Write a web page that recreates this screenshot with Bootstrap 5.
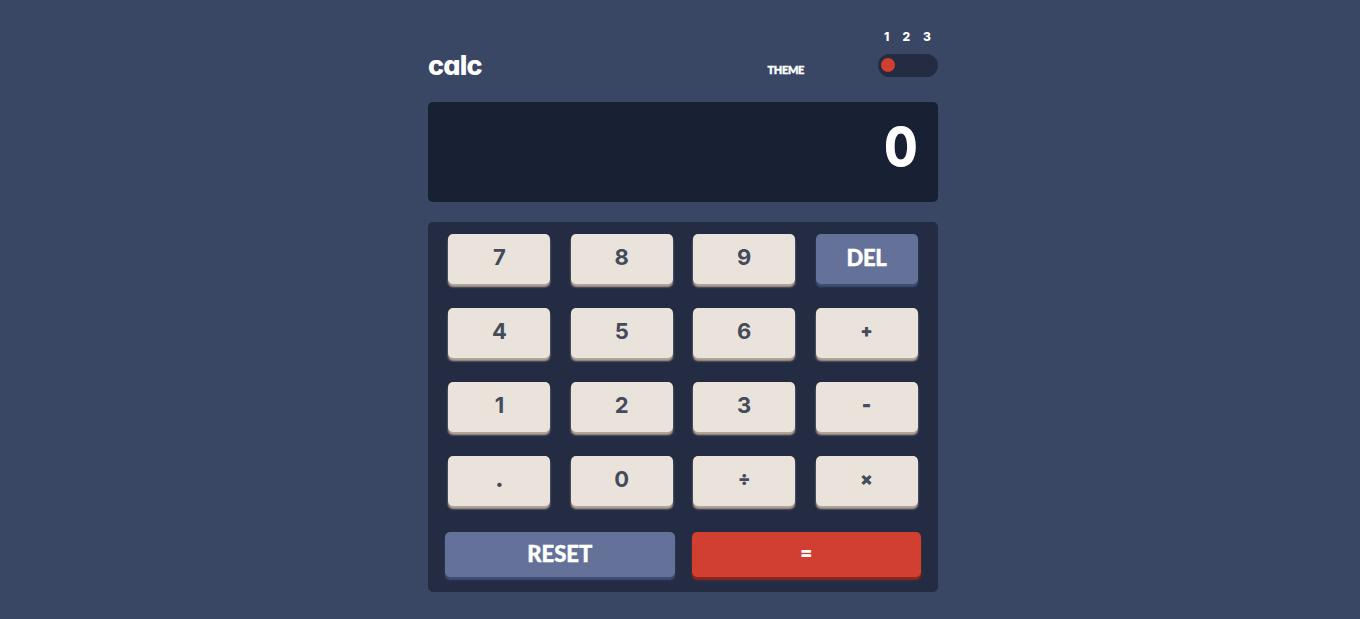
<!DOCTYPE html>
<html lang="en">
<head>
<meta charset="utf-8">
<meta name="viewport" content="width=device-width, initial-scale=1">
<title>calc</title>
<link href="https://cdn.jsdelivr.net/npm/bootstrap@5.3.0/dist/css/bootstrap.min.css" rel="stylesheet">
<style>
  body { background: #3a4764; color: #fff; font-family: Inter, "Liberation Sans", sans-serif; font-weight: 700; font-feature-settings: "cv11", "cv03", "cv04"; }
  .calculator { width: 510px; margin-left: 428px; padding-top: 30px; }
  .top-bar { height: 72px; }
  .brand { font-size: 27px; font-weight: 800; line-height: 36px; letter-spacing: -.8px; margin-top: 18px; }
  .theme-label { font-family: Lato, sans-serif; font-size: 11px; font-weight: 900; line-height: 14px; letter-spacing: -.35px; -webkit-text-stroke: .4px #fff; margin: 33px 74px 0 auto; }
  .theme-nums { font-size: 12px; font-weight: 800; line-height: 14px; padding: 0 7px 0 6px; }
  .switch-track { width: 60px; height: 23px; border-radius: 12px; background: #232c43; padding: 4px 3px; margin-top: 10px; }
  .switch-knob { width: 14px; height: 14px; background: #d03f2f; }
  .screen { height: 100px; background: #182034; border-radius: 5px; padding: 18px 20px; font-size: 53px; font-weight: 800; line-height: 54px; }
  .screen-value { display: inline-block; transform: scaleX(.92); transform-origin: right; }
  .keypad { height: 370px; margin-top: 20px; padding-top: 12px; background: #232c43; border-radius: 5px; }
  .key-row { margin-bottom: 24px; }
  .key-row:last-child { margin: 26px 0 0; }
  .key { --bs-btn-border-width: 0; --bs-btn-border-radius: 5px; --bs-btn-padding-x: 0; --bs-btn-padding-y: 0; --bs-btn-font-size: 22px; --bs-btn-font-weight: 700; --bs-btn-color: #444b5a; --bs-btn-bg: #eae3dc; --bs-btn-hover-color: #444b5a; --bs-btn-hover-bg: #fff; --edge: #b4a597; width: 20%; height: 50px; line-height: 46px; padding-bottom: 4px; box-shadow: 0 3px 2px var(--edge); }
  .key-blue { --bs-btn-color: #fff; --bs-btn-bg: #647299; --bs-btn-hover-color: #fff; --bs-btn-hover-bg: #7a88b0; --bs-btn-font-weight: 900; --bs-btn-font-family: Lato, sans-serif; --edge: #414f78; line-height: 48px; padding-bottom: 2px; letter-spacing: -.3px; -webkit-text-stroke: .4px #fff; }
  .key-red { --bs-btn-color: #fff; --bs-btn-bg: #d03f2f; --bs-btn-hover-color: #fff; --bs-btn-hover-bg: #e65b4c; --edge: #93261a; }
  .key-wide { width: 45%; height: 45px; line-height: 42px; }
  .key-wide.key-blue { line-height: 43px; letter-spacing: 0; }
  .key-op { --bs-btn-font-weight: 900; font-size: 18px; }
  .key-minus { -webkit-text-stroke: .7px; }
  .key-dot { --bs-btn-font-weight: 900; }
</style>
</head>
<body>
<main class="calculator">
  <header class="top-bar d-flex align-items-start">
    <div class="brand">calc</div>
    <div class="theme-label">THEME</div>
    <div>
      <div class="theme-nums d-flex justify-content-between"><span>1</span><span>2</span><span>3</span></div>
      <div class="switch-track"><div class="switch-knob rounded-circle"></div></div>
    </div>
  </header>
  <div class="screen text-end"><span class="screen-value">0</span></div>
  <section class="keypad">
    <div class="key-row d-flex justify-content-evenly">
      <button class="btn key">7</button><button class="btn key">8</button><button class="btn key">9</button><button class="btn key key-blue">DEL</button>
    </div>
    <div class="key-row d-flex justify-content-evenly">
      <button class="btn key">4</button><button class="btn key">5</button><button class="btn key">6</button><button class="btn key key-op">+</button>
    </div>
    <div class="key-row d-flex justify-content-evenly">
      <button class="btn key">1</button><button class="btn key">2</button><button class="btn key">3</button><button class="btn key key-op key-minus">-</button>
    </div>
    <div class="key-row d-flex justify-content-evenly">
      <button class="btn key key-dot">.</button><button class="btn key">0</button><button class="btn key key-op">÷</button><button class="btn key key-op">×</button>
    </div>
    <div class="key-row d-flex justify-content-evenly">
      <button class="btn key key-wide key-blue">RESET</button><button class="btn key key-wide key-red key-op">=</button>
    </div>
  </section>
</main>
<script src="https://cdn.jsdelivr.net/npm/bootstrap@5.3.0/dist/js/bootstrap.bundle.min.js"></script>
</body>
</html>
